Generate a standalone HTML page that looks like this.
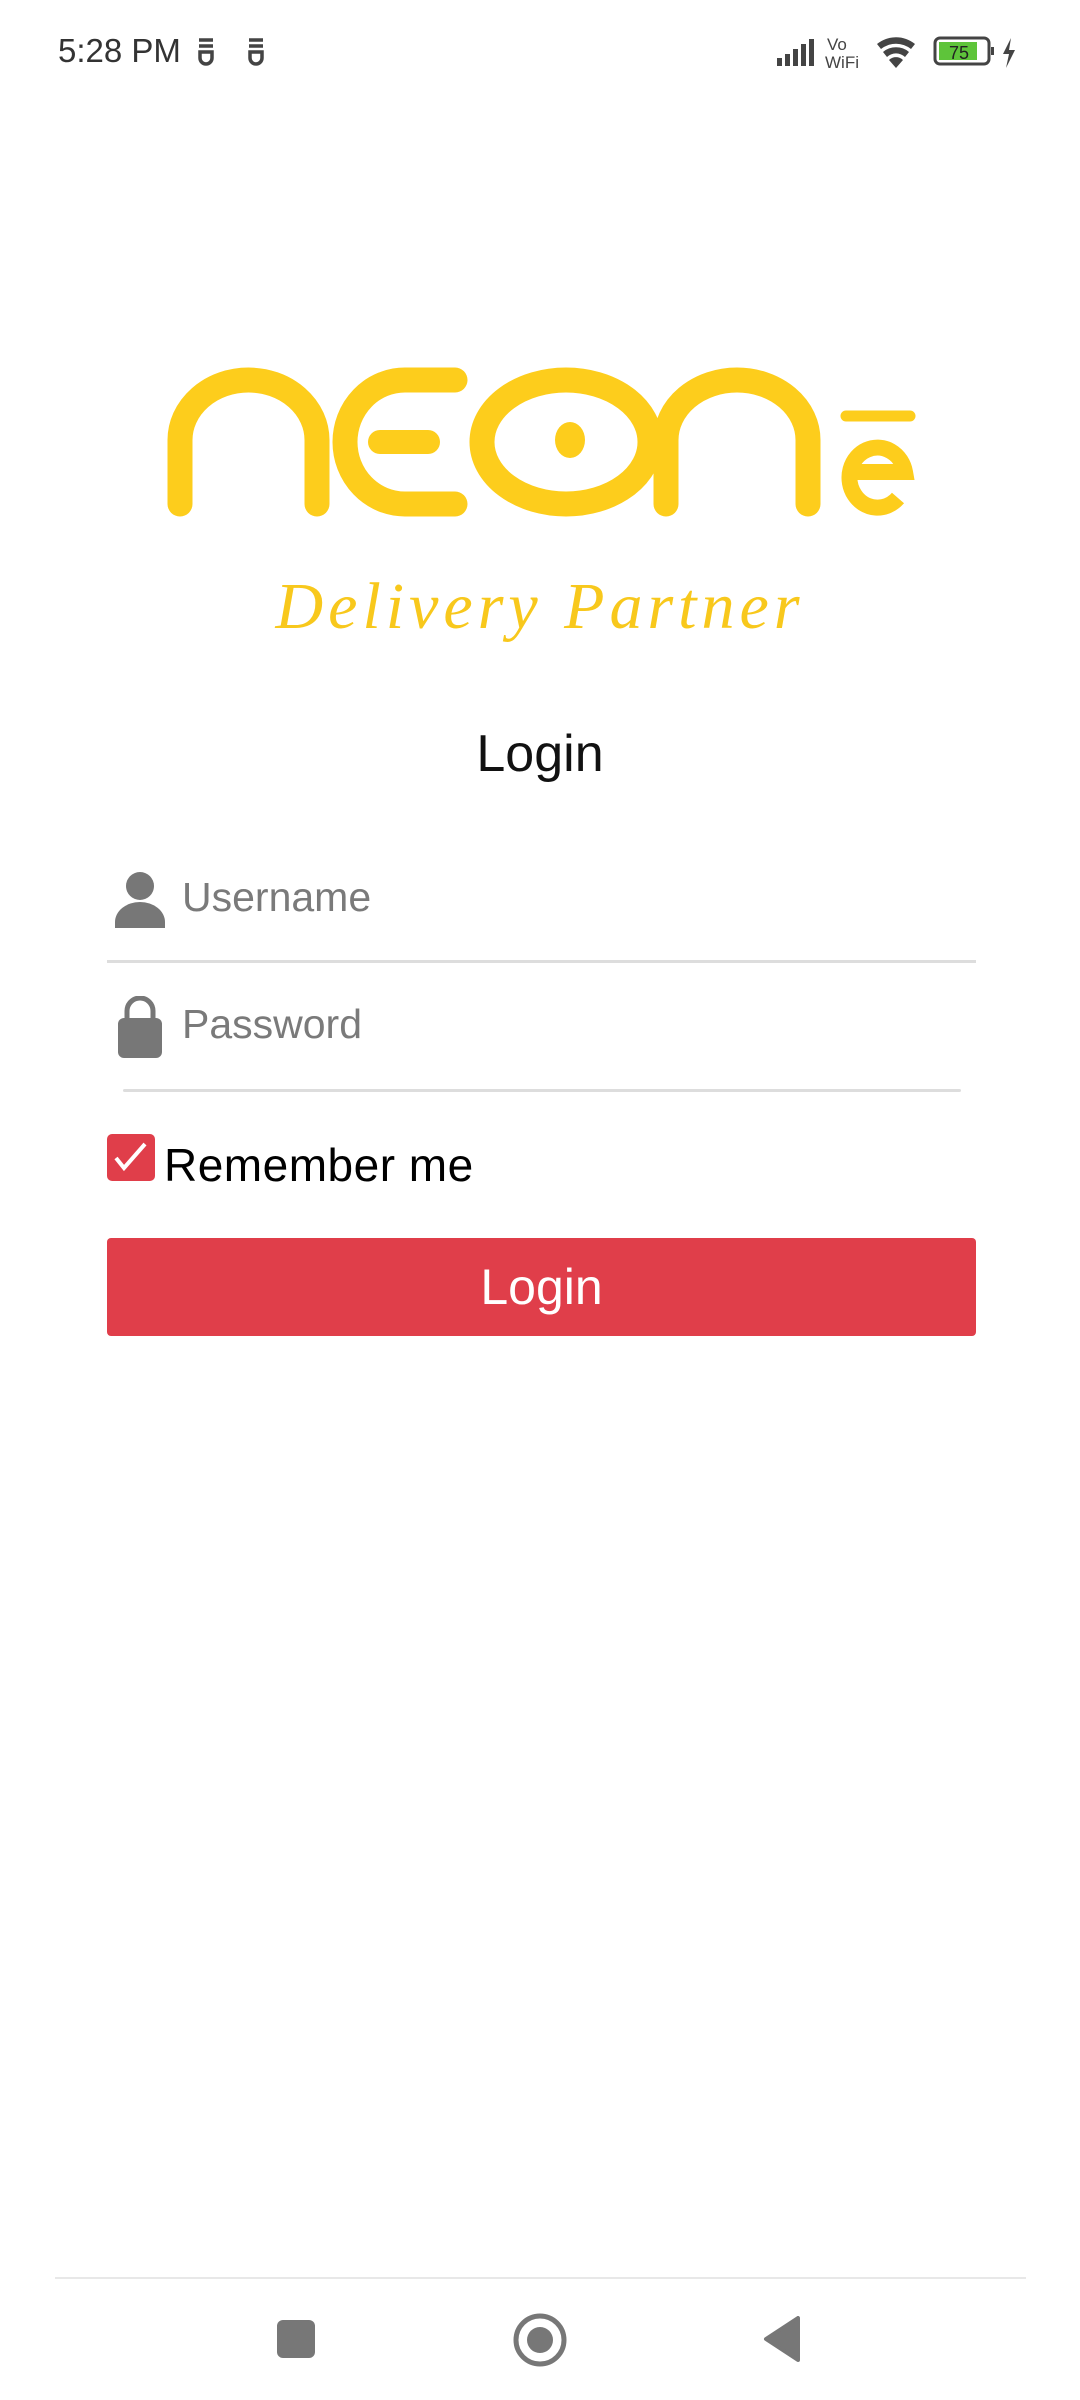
<!DOCTYPE html>
<html><head><meta charset="utf-8"><style>
html,body{margin:0;padding:0;background:#fff;}
body{width:1080px;height:2400px;position:relative;overflow:hidden;font-family:"Liberation Sans",sans-serif;}
.abs{position:absolute;}
</style></head><body>
<div class="abs" style="left:58px;top:32px;font-size:33px;color:#333;">5:28 PM</div>
<svg class="abs" style="left:195px;top:34px" width="80" height="36" viewBox="0 0 80 36">
<g fill="none" stroke="#444" stroke-width="3.5"><path d="M4 6h14M4 12h14M5 18h12v6a6 6 0 0 1-12 0z"/><path d="M54 6h14M54 12h14M55 18h12v6a6 6 0 0 1-12 0z"/></g></svg>
<svg class="abs" style="left:775px;top:30px" width="250" height="45" viewBox="0 0 250 45">
<g fill="#444"><rect x="2" y="28" width="5" height="8"/><rect x="10" y="24" width="5" height="12"/><rect x="18" y="19" width="5" height="17"/><rect x="26" y="14" width="5" height="22"/><rect x="34" y="9" width="5" height="27"/></g>
<text x="52" y="20" font-size="17" fill="#444" font-family="Liberation Sans">Vo</text>
<text x="50" y="38" font-size="17" fill="#444" font-family="Liberation Sans">WiFi</text>
<path d="M102 14a30 30 0 0 1 38 0l-4 5a24 24 0 0 0-30 0zM108 22a20 20 0 0 1 26 0l-4 5a13 13 0 0 0-18 0zM114 30a10 10 0 0 1 14 0l-7 8z" fill="#444"/>
<rect x="160" y="8" width="54" height="26" rx="5" fill="none" stroke="#444" stroke-width="3"/>
<rect x="164" y="12" width="38" height="18" fill="#5ec43a"/>
<rect x="216" y="17" width="3" height="8" fill="#444"/>
<text x="174" y="29" font-size="18" fill="#222" font-family="Liberation Sans">75</text>
<path d="M236 8l-8 16h6l-3 14 9-18h-6z" fill="#444"/>
</svg>

<svg class="abs" style="left:0;top:0" width="1080" height="700" viewBox="0 0 1080 700">
<g fill="none" stroke="#fdcd1c" stroke-width="25" stroke-linecap="round">
<path d="M180 504V440A68.5 60 0 0 1 317 440V504"/>
<path d="M455 380H405A60 62 0 0 0 405 504H455"/>
<path d="M380 442H428" stroke-width="24"/>
<ellipse cx="566" cy="442" rx="84" ry="62"/>
<path d="M666 504V440A71 60 0 0 1 808 440V504"/>
<path d="M846 416H910" stroke-width="11"/>
<path d="M852 472H905A28 30 0 1 0 898 498" stroke-width="16" stroke-linecap="butt"/>
</g>
<ellipse cx="570" cy="440" rx="15" ry="18" fill="#fdcd1c"/>
<text x="540" y="628" text-anchor="middle" font-family="Liberation Serif" font-style="italic" font-size="66" fill="#f8c81c" letter-spacing="5">Delivery Partner</text>
</svg>

<div class="abs" style="left:0;width:1080px;top:724px;text-align:center;font-size:52px;color:#111;">Login</div>

<svg class="abs" style="left:113px;top:870px" width="54" height="58" viewBox="0 0 54 58"><circle cx="27" cy="16" r="14" fill="#777"/><path d="M2 58v-6a25 20 0 0 1 50 0v6z" fill="#777"/></svg>
<div class="abs" style="left:182px;top:874px;font-size:41px;color:#7a7a7a;">Username</div>
<div class="abs" style="left:107px;top:960px;width:869px;height:3px;background:#ddd;"></div>

<svg class="abs" style="left:117px;top:996px" width="46" height="62" viewBox="0 0 46 62"><path d="M10 24V15a13 13 0 0 1 26 0v9" fill="none" stroke="#777" stroke-width="5"/><rect x="1" y="22" width="44" height="40" rx="6" fill="#777"/></svg>
<div class="abs" style="left:182px;top:1001px;font-size:41px;color:#7a7a7a;">Password</div>
<div class="abs" style="left:123px;top:1089px;width:838px;height:3px;background:#ddd;border-radius:2px;"></div>

<div class="abs" style="left:107px;top:1134px;width:48px;height:47px;background:#e03e4a;border-radius:5px;"></div>
<svg class="abs" style="left:107px;top:1134px" width="48" height="47" viewBox="0 0 48 47"><path d="M9 24l8 10L38 10" fill="none" stroke="#fff" stroke-width="4"/></svg>
<div class="abs" style="left:164px;top:1138px;font-size:46px;color:#000;letter-spacing:0.5px;">Remember me</div>

<div class="abs" style="left:107px;top:1238px;width:869px;height:98px;background:#e03e4a;border-radius:4px;color:#fff;font-size:50px;text-align:center;line-height:98px;">Login</div>

<div class="abs" style="left:55px;top:2277px;width:971px;height:2px;background:#e8e8e8;"></div>
<div class="abs" style="left:277px;top:2320px;width:38px;height:38px;background:#777;border-radius:6px;"></div>
<svg class="abs" style="left:512px;top:2312px" width="56" height="56" viewBox="0 0 56 56"><circle cx="28" cy="28" r="24" fill="none" stroke="#777" stroke-width="5"/><circle cx="28" cy="28" r="13" fill="#777"/></svg>
<svg class="abs" style="left:762px;top:2316px" width="42" height="46" viewBox="0 0 42 46"><path d="M36 2V44L4 23z" fill="#777" stroke="#777" stroke-width="4" stroke-linejoin="round"/></svg>
</body></html>
